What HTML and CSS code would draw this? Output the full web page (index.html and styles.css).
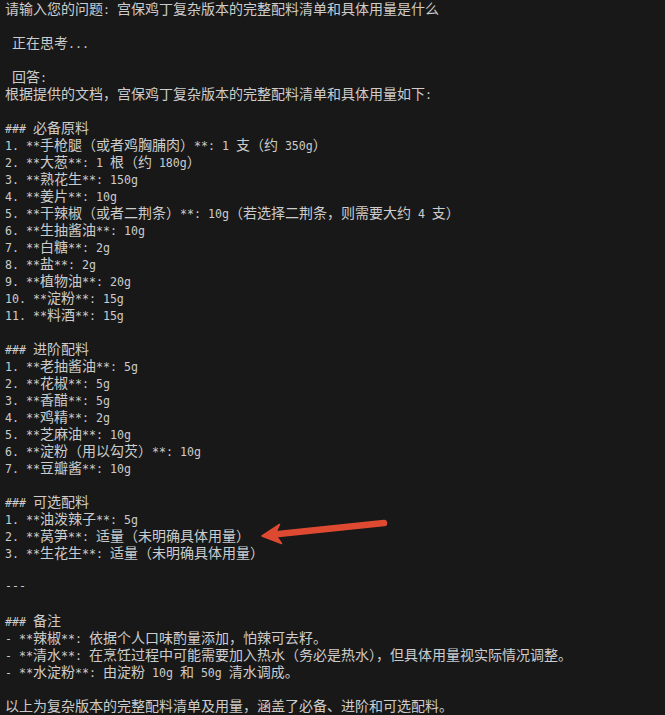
FILE: index.html
```html
<!DOCTYPE html>
<html lang="zh-CN">
<head>
<meta charset="utf-8">
<title>终端</title>
<link rel="stylesheet" href="styles.css">
</head>
<body>
<main class="term">
<div class="l"><span class="c">请输入您的问题</span>: <span class="c">宫保鸡丁复杂版本的完整配料清单和具体用量是什么</span></div>
<div class="l"></div>
<div class="l"> <span class="c">正在思考</span>...</div>
<div class="l"></div>
<div class="l"> <span class="c">回答</span>:</div>
<div class="l"><span class="c">根据提供的文档，宫保鸡丁复杂版本的完整配料清单和具体用量如下</span>:</div>
<div class="l"></div>
<div class="l">### <span class="c">必备原料</span></div>
<div class="l">1. **<span class="c">手枪腿（或者鸡胸脯肉）</span>**: 1 <span class="c">支（约</span> 350g<span class="c">）</span></div>
<div class="l">2. **<span class="c">大葱</span>**: 1 <span class="c">根（约</span> 180g<span class="c">）</span></div>
<div class="l">3. **<span class="c">熟花生</span>**: 150g</div>
<div class="l">4. **<span class="c">姜片</span>**: 10g</div>
<div class="l">5. **<span class="c">干辣椒（或者二荆条）</span>**: 10g<span class="c">（若选择二荆条，则需要大约</span> 4 <span class="c">支）</span></div>
<div class="l">6. **<span class="c">生抽酱油</span>**: 10g</div>
<div class="l">7. **<span class="c">白糖</span>**: 2g</div>
<div class="l">8. **<span class="c">盐</span>**: 2g</div>
<div class="l">9. **<span class="c">植物油</span>**: 20g</div>
<div class="l">10. **<span class="c">淀粉</span>**: 15g</div>
<div class="l">11. **<span class="c">料酒</span>**: 15g</div>
<div class="l"></div>
<div class="l">### <span class="c">进阶配料</span></div>
<div class="l">1. **<span class="c">老抽酱油</span>**: 5g</div>
<div class="l">2. **<span class="c">花椒</span>**: 5g</div>
<div class="l">3. **<span class="c">香醋</span>**: 5g</div>
<div class="l">4. **<span class="c">鸡精</span>**: 2g</div>
<div class="l">5. **<span class="c">芝麻油</span>**: 10g</div>
<div class="l">6. **<span class="c">淀粉（用以勾芡）</span>**: 10g</div>
<div class="l">7. **<span class="c">豆瓣酱</span>**: 10g</div>
<div class="l"></div>
<div class="l">### <span class="c">可选配料</span></div>
<div class="l">1. **<span class="c">油泼辣子</span>**: 5g</div>
<div class="l">2. **<span class="c">莴笋</span>**: <span class="c">适量（未明确具体用量）</span></div>
<div class="l">3. **<span class="c">生花生</span>**: <span class="c">适量（未明确具体用量）</span></div>
<div class="l"></div>
<div class="l">---</div>
<div class="l"></div>
<div class="l">### <span class="c">备注</span></div>
<div class="l">- **<span class="c">辣椒</span>**: <span class="c">依据个人口味酌量添加，怕辣可去籽。</span></div>
<div class="l">- **<span class="c">清水</span>**: <span class="c">在烹饪过程中可能需要加入热水（务必是热水），但具体用量视实际情况调整。</span></div>
<div class="l">- **<span class="c">水淀粉</span>**: <span class="c">由淀粉</span> 10g <span class="c">和</span> 50g <span class="c">清水调成。</span></div>
<div class="l"></div>
<div class="l"><span class="c">以上为复杂版本的完整配料清单及用量，涵盖了必备、进阶和可选配料。</span></div>
</main>
<svg class="arrow" width="665" height="715" viewBox="0 0 665 715" aria-hidden="true">
  <line x1="276" y1="534.3" x2="384" y2="523" stroke="#de4a31" stroke-width="6.5" stroke-linecap="round"/>
  <polygon points="262,536 279.5,524.5 275,534.3 281.5,543.5" fill="#de4a31" stroke="#de4a31" stroke-width="1.5" stroke-linejoin="round"/>
</svg>
</body>
</html>
```
FILE: styles.css
```css
html, body {
  margin: 0;
  padding: 0;
  background: #181818;
}
body {
  position: relative;
  width: 665px;
  height: 715px;
  overflow: hidden;
}
.term {
  padding: 0 0 0 5px;
  color: #cccccc;
  font-family: "DejaVu Sans Mono", "Noto Sans CJK SC", monospace;
  font-size: 11.62px;
}
.l {
  height: 17px;
  line-height: 17px;
  white-space: pre;
}
.c {
  font-family: "Noto Sans CJK SC", sans-serif;
  font-size: 14px;
  line-height: 17px;
}
.arrow {
  position: absolute;
  left: 0;
  top: 0;
  pointer-events: none;
}
```
